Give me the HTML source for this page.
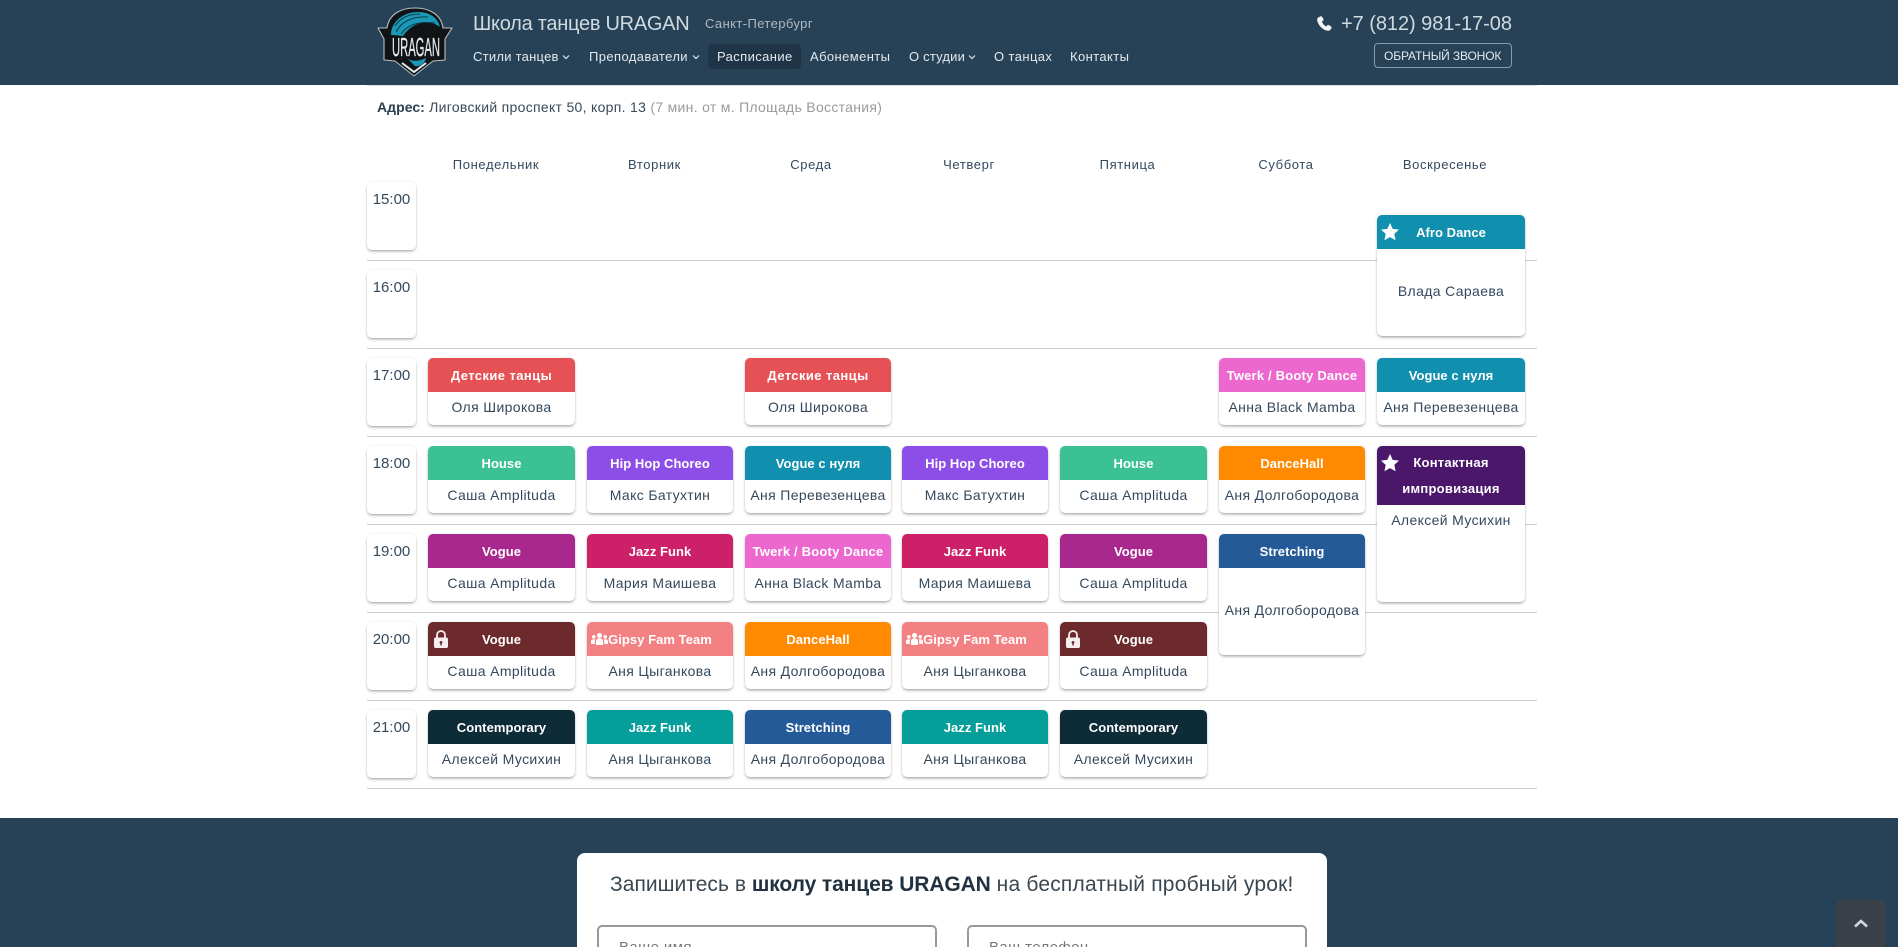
<!DOCTYPE html>
<html lang="ru"><head><meta charset="utf-8"><title>Расписание — Школа танцев URAGAN</title>
<style>
*{box-sizing:border-box}
html,body{margin:0;padding:0;width:1898px;height:947px;overflow:hidden;background:#fff;font-family:"Liberation Sans",sans-serif;color:#34495e}
#p{position:relative;width:1898px;height:947px;overflow:hidden;background:#fff}
.a{position:absolute;white-space:nowrap}
.bar{position:absolute;left:0;width:1898px;background:#274257}
.nav{font-size:13px;line-height:20px;top:47px;color:#e3e9ed;letter-spacing:.4px}
.chev{position:absolute;top:54px;width:8px;height:6px}
.day{top:156px;font-size:13px;line-height:18px;letter-spacing:.62px;color:#34495e;transform:translateX(-50%)}
.ln{position:absolute;left:367px;width:1170px;height:1px;background:#ccc}
.tm{position:absolute;left:367px;width:49px;height:68px;background:#fff;border-radius:5px;box-shadow:0 2px 3px -1px rgba(0,0,0,.38),0 0 2px rgba(0,0,0,.1);text-align:center;font-size:15px;line-height:36px;color:#34495e}
.c{position:absolute;height:67px;background:#fff;border-radius:5px;box-shadow:0 2px 3px -1px rgba(0,0,0,.4),0 0 2px rgba(0,0,0,.1);text-align:center;overflow:hidden}
.h{height:34px;line-height:35px;color:#fff;font-weight:700;font-size:13px;white-space:nowrap;letter-spacing:.05px}
.y{letter-spacing:.42px}
.w{letter-spacing:.2px}
.b{font-size:14px;line-height:30px;color:#34495e;white-space:nowrap;letter-spacing:.36px}
.c1{left:428px;width:147px}.c2{left:587px;width:146px}.c3{left:745px;width:146px}.c4{left:902px;width:146px}.c5{left:1060px;width:147px}.c6{left:1219px;width:146px}.c7{left:1377px;width:148px}
.r17{top:358px}.r18{top:446px}.r19{top:534px}.r20{top:622px}.r21{top:710px}
.ic{position:absolute;fill:#fff}
.inp{position:absolute;top:925px;height:40px;width:340px;border:2px solid #999;border-radius:5px;background:#fff}
.ph{top:938px;font-size:15px;line-height:20px;color:#777;letter-spacing:.4px}
</style></head><body><div id="p">

<div class="bar" style="top:0;height:85px"></div>
<div class="a" style="left:367px;top:85px;width:1170px;height:1px;background:#ddd"></div>

<svg class="a" style="left:370px;top:0" width="100" height="85" viewBox="0 0 100 85">
<path d="M45 8C31 8 19 14 17 28L8 28L14 39L14 60L25 61L44 76L63 61L75 60L75 39L82 28L73 28C71 14 59 8 45 8Z" fill="#101417" stroke="#b9bec2" stroke-width="1.100" stroke-linejoin="round"/>
<path d="M21 35C21 21 34 12 48 12C60 12 68 18 70 27C61 20 44 20 33 36L24 35Z" fill="#1a98b6"/>
<path d="M26 32C31 22 42 16 58 17M31 34C37 25 48 21 65 23M25 26C30 18 38 14 50 14" fill="none" stroke="#0e3a48" stroke-width="1"/>
<text x="46" y="56" font-family="Liberation Sans,sans-serif" font-weight="400" font-size="26" fill="#e6e8ea" stroke="#e6e8ea" stroke-width=".3" text-anchor="middle" textLength="48" lengthAdjust="spacingAndGlyphs">URAGAN</text>
<path d="M38 59C44 62 50 61 56 58C55 64 49 67 45 66Z" fill="#1a98b6"/>
<path d="M32 63L44 72L56 63" fill="none" stroke="#e8eaec" stroke-width="2"/>
</svg>

<div class="a" style="left:473px;top:12px;font-size:20px;line-height:24px;color:#cfdae1;letter-spacing:-.27px">Школа танцев URAGAN</div>
<div class="a" style="left:705px;top:15px;font-size:13px;line-height:18px;color:#aebac3;letter-spacing:.4px">Санкт-Петербург</div>

<div class="a" style="left:708px;top:44px;width:93px;height:25px;background:#1f3547;border-radius:4px"></div>
<div class="a nav" style="left:473px;letter-spacing:.25px">Стили танцев</div>
<svg class="chev" style="left:562px" viewBox="0 0 8 6"><path d="M1 1.500L4 4.500L7 1.500" fill="none" stroke="#dfe6ea" stroke-width="1.200"/></svg>
<div class="a nav" style="left:589px">Преподаватели</div>
<svg class="chev" style="left:692px" viewBox="0 0 8 6"><path d="M1 1.500L4 4.500L7 1.500" fill="none" stroke="#dfe6ea" stroke-width="1.200"/></svg>
<div class="a nav" style="left:717px">Расписание</div>
<div class="a nav" style="left:810px">Абонементы</div>
<div class="a nav" style="left:909px;letter-spacing:.2px">О студии</div>
<svg class="chev" style="left:968px" viewBox="0 0 8 6"><path d="M1 1.500L4 4.500L7 1.500" fill="none" stroke="#dfe6ea" stroke-width="1.200"/></svg>
<div class="a nav" style="left:994px">О танцах</div>
<div class="a nav" style="left:1070px">Контакты</div>

<svg class="a" style="left:1317px;top:16px" width="15" height="15" viewBox="0 0 15 15"><path d="M3.400.4L1 1.600C.1 2.200-.1 4 .7 6.200 1.900 9.300 5 13 9 14.400c1.800.6 3.500.4 4.200-.4l1.300-2c.3-.5.200-1-.2-1.300L11.700 9c-.5-.3-1-.2-1.300.2l-1 1.300C7.500 10 5.400 7.400 5 5.400l1.200-.9c.4-.3.500-.8.300-1.300L5 .7C4.700.2 4 .1 3.400.4Z" fill="#f2f5f7"/></svg>
<div class="a" style="left:1341px;top:12px;font-size:20px;line-height:24px;color:#cfdae1;letter-spacing:-.05px">+7 (812) 981-17-08</div>
<div class="a" style="left:1374px;top:43px;width:138px;height:25px;border:1px solid #8b99a4;border-radius:4px"></div>
<div class="a" style="left:1384px;top:47px;font-size:12px;line-height:18px;color:#e3e9ed;letter-spacing:-.13px">ОБРАТНЫЙ ЗВОНОК</div>

<div class="a" style="left:377px;top:98px;font-size:14px;line-height:18px;letter-spacing:.3px;color:#555"><b style="color:#2a4053;letter-spacing:.05px">Адрес:</b> <span style="color:#3a4a58">Лиговский проспект 50, корп. 13</span> <span style="color:#9a9a9a">(7 мин. от м. Площадь Восстания)</span></div>

<div class="a day" style="left:496px">Понедельник</div>
<div class="a day" style="left:654.500px">Вторник</div>
<div class="a day" style="left:811px">Среда</div>
<div class="a day" style="left:969px">Четверг</div>
<div class="a day" style="left:1127.500px">Пятница</div>
<div class="a day" style="left:1286px">Суббота</div>
<div class="a day" style="left:1445px">Воскресенье</div>

<div class="ln" style="top:260px"></div><div class="ln" style="top:348px"></div><div class="ln" style="top:436px"></div><div class="ln" style="top:524px"></div><div class="ln" style="top:612px"></div><div class="ln" style="top:700px"></div><div class="ln" style="top:788px"></div>

<div class="tm" style="top:182px">15:00</div>
<div class="tm" style="top:270px">16:00</div>
<div class="tm" style="top:358px">17:00</div>
<div class="tm" style="top:446px">18:00</div>
<div class="tm" style="top:534px">19:00</div>
<div class="tm" style="top:622px">20:00</div>
<div class="tm" style="top:710px">21:00</div>

<!-- 15:00 -->
<div class="c c7" style="top:215px;height:121px"><div class="h" style="background:#118fae">Afro Dance</div><div class="b" style="line-height:84px">Влада Сараева</div>
<svg class="ic" style="left:4px;top:8px" width="18" height="18" viewBox="0 0 18 18"><path d="M9 0l2.700 5.900 6.300.7-4.700 4.300 1.300 6.400L9 14.100 3.400 17.300l1.300-6.400L0 6.600l6.300-.7Z"/></svg></div>

<!-- 17:00 -->
<div class="c c1 r17"><div class="h y" style="background:#e65155">Детские танцы</div><div class="b">Оля Широкова</div></div>
<div class="c c3 r17"><div class="h y" style="background:#e65155">Детские танцы</div><div class="b">Оля Широкова</div></div>
<div class="c c6 r17"><div class="h w" style="background:#ec68cf">Twerk / Booty Dance</div><div class="b">Анна Black Mamba</div></div>
<div class="c c7 r17"><div class="h" style="background:#118fae">Vogue с нуля</div><div class="b">Аня Перевезенцева</div></div>

<!-- 18:00 -->
<div class="c c1 r18"><div class="h" style="background:#3cc195">House</div><div class="b">Саша Amplituda</div></div>
<div class="c c2 r18"><div class="h" style="background:#8d4ee8">Hip Hop Choreo</div><div class="b">Макс Батухтин</div></div>
<div class="c c3 r18"><div class="h" style="background:#118fae">Vogue с нуля</div><div class="b">Аня Перевезенцева</div></div>
<div class="c c4 r18"><div class="h" style="background:#8d4ee8">Hip Hop Choreo</div><div class="b">Макс Батухтин</div></div>
<div class="c c5 r18"><div class="h" style="background:#3cc195">House</div><div class="b">Саша Amplituda</div></div>
<div class="c c6 r18"><div class="h" style="background:#ff8a00">DanceHall</div><div class="b">Аня Долгобородова</div></div>
<div class="c c7 r18" style="height:156px"><div class="h y" style="background:#4a176b;height:59px;line-height:25.500px;padding-top:4px;letter-spacing:.25px">Контактная<br>импровизация</div><div class="b">Алексей Мусихин</div>
<svg class="ic" style="left:4px;top:8px" width="18" height="18" viewBox="0 0 18 18"><path d="M9 0l2.700 5.900 6.300.7-4.700 4.300 1.300 6.400L9 14.100 3.400 17.300l1.300-6.400L0 6.600l6.300-.7Z"/></svg></div>

<!-- 19:00 -->
<div class="c c1 r19"><div class="h" style="background:#a9288d">Vogue</div><div class="b">Саша Amplituda</div></div>
<div class="c c2 r19"><div class="h" style="background:#cc2068">Jazz Funk</div><div class="b">Мария Маишева</div></div>
<div class="c c3 r19"><div class="h w" style="background:#ec68cf">Twerk / Booty Dance</div><div class="b">Анна Black Mamba</div></div>
<div class="c c4 r19"><div class="h" style="background:#cc2068">Jazz Funk</div><div class="b">Мария Маишева</div></div>
<div class="c c5 r19"><div class="h" style="background:#a9288d">Vogue</div><div class="b">Саша Amplituda</div></div>
<div class="c c6 r19" style="height:121px"><div class="h" style="background:#245a98">Stretching</div><div class="b" style="line-height:84px">Аня Долгобородова</div></div>

<!-- 20:00 -->
<div class="c c1 r20"><div class="h" style="background:#6c2a2c">Vogue</div><div class="b">Саша Amplituda</div>
<svg class="ic" style="left:6px;top:8px" width="14" height="18" viewBox="0 0 14 18"><path d="M3 8V5a4 4 0 0 1 8 0v3" fill="none" stroke="#f4eeee" stroke-width="1.800"/><path fill-rule="evenodd" d="M1.500 7.500h11c.8 0 1.500.7 1.500 1.500v7.500c0 .8-.7 1.500-1.500 1.500h-11C.7 18 0 17.300 0 16.500V9c0-.8.7-1.500 1.500-1.500ZM7 11a1.500 1.500 0 0 0-.7 2.800V15.500h1.400v-1.700A1.500 1.500 0 0 0 7 11Z" fill="#f4eeee"/></svg></div>
<div class="c c2 r20"><div class="h" style="background:#f38183">Gipsy Fam Team</div><div class="b">Аня Цыганкова</div>
<svg class="ic" style="left:4px;top:11px" width="17" height="12" viewBox="0 0 17 12"><circle cx="8.500" cy="2.500" r="2.500"/><circle cx="2.800" cy="3.800" r="1.800"/><circle cx="14.200" cy="3.800" r="1.800"/><path d="M5 12V8c0-1.600 1.400-2.600 3.500-2.600S12 6.400 12 8v4ZM0 11V8.300C0 7 1.200 6.200 2.800 6.200c.6 0 1 .1 1.400.3C3.900 7 3.800 7.500 3.800 8v3ZM17 11V8.300C17 7 15.800 6.200 14.200 6.200c-.6 0-1 .1-1.400.3.300.5.400 1 .4 1.500v3Z"/></svg></div>
<div class="c c3 r20"><div class="h" style="background:#ff8a00">DanceHall</div><div class="b">Аня Долгобородова</div></div>
<div class="c c4 r20"><div class="h" style="background:#f38183">Gipsy Fam Team</div><div class="b">Аня Цыганкова</div>
<svg class="ic" style="left:4px;top:11px" width="17" height="12" viewBox="0 0 17 12"><circle cx="8.500" cy="2.500" r="2.500"/><circle cx="2.800" cy="3.800" r="1.800"/><circle cx="14.200" cy="3.800" r="1.800"/><path d="M5 12V8c0-1.600 1.400-2.600 3.500-2.600S12 6.400 12 8v4ZM0 11V8.300C0 7 1.200 6.200 2.800 6.200c.6 0 1 .1 1.400.3C3.900 7 3.800 7.500 3.800 8v3ZM17 11V8.300C17 7 15.800 6.200 14.200 6.200c-.6 0-1 .1-1.400.3.300.5.400 1 .4 1.500v3Z"/></svg></div>
<div class="c c5 r20"><div class="h" style="background:#6c2a2c">Vogue</div><div class="b">Саша Amplituda</div>
<svg class="ic" style="left:6px;top:8px" width="14" height="18" viewBox="0 0 14 18"><path d="M3 8V5a4 4 0 0 1 8 0v3" fill="none" stroke="#f4eeee" stroke-width="1.800"/><path fill-rule="evenodd" d="M1.500 7.500h11c.8 0 1.500.7 1.500 1.500v7.500c0 .8-.7 1.500-1.500 1.500h-11C.7 18 0 17.300 0 16.500V9c0-.8.7-1.500 1.500-1.500ZM7 11a1.500 1.500 0 0 0-.7 2.800V15.500h1.400v-1.700A1.500 1.500 0 0 0 7 11Z" fill="#f4eeee"/></svg></div>

<!-- 21:00 -->
<div class="c c1 r21"><div class="h" style="background:#0e2c38">Contemporary</div><div class="b">Алексей Мусихин</div></div>
<div class="c c2 r21"><div class="h" style="background:#069e9a">Jazz Funk</div><div class="b">Аня Цыганкова</div></div>
<div class="c c3 r21"><div class="h" style="background:#245a98">Stretching</div><div class="b">Аня Долгобородова</div></div>
<div class="c c4 r21"><div class="h" style="background:#069e9a">Jazz Funk</div><div class="b">Аня Цыганкова</div></div>
<div class="c c5 r21"><div class="h" style="background:#0e2c38">Contemporary</div><div class="b">Алексей Мусихин</div></div>

<!-- footer -->
<div class="bar" style="top:818px;height:129px"></div>
<div class="a" style="left:577px;top:853px;width:750px;height:94px;background:#fff;border-radius:8px 8px 0 0"></div>
<div class="a" style="left:610px;top:872px;font-size:21px;line-height:26px;color:#3a4650;letter-spacing:.04px">Запишитесь в <b style="color:#22313f;letter-spacing:-.1px">школу танцев URAGAN</b> <span style="letter-spacing:.2px">на бесплатный пробный урок!</span></div>
<div class="inp" style="left:597px"></div>
<div class="inp" style="left:967px"></div>
<div class="a ph" style="left:619px">Ваше имя</div>
<div class="a ph" style="left:989px">Ваш телефон</div>

<div class="a" style="left:1836px;top:900px;width:49px;height:47px;background:#3a4149;border-radius:5px 5px 0 0"></div>
<svg class="a" style="left:1854px;top:919px" width="14" height="9" viewBox="0 0 14 9"><path d="M1 7.500L7 2L13 7.500" fill="none" stroke="#cfd6dc" stroke-width="2.600"/></svg>
</div></body></html>
